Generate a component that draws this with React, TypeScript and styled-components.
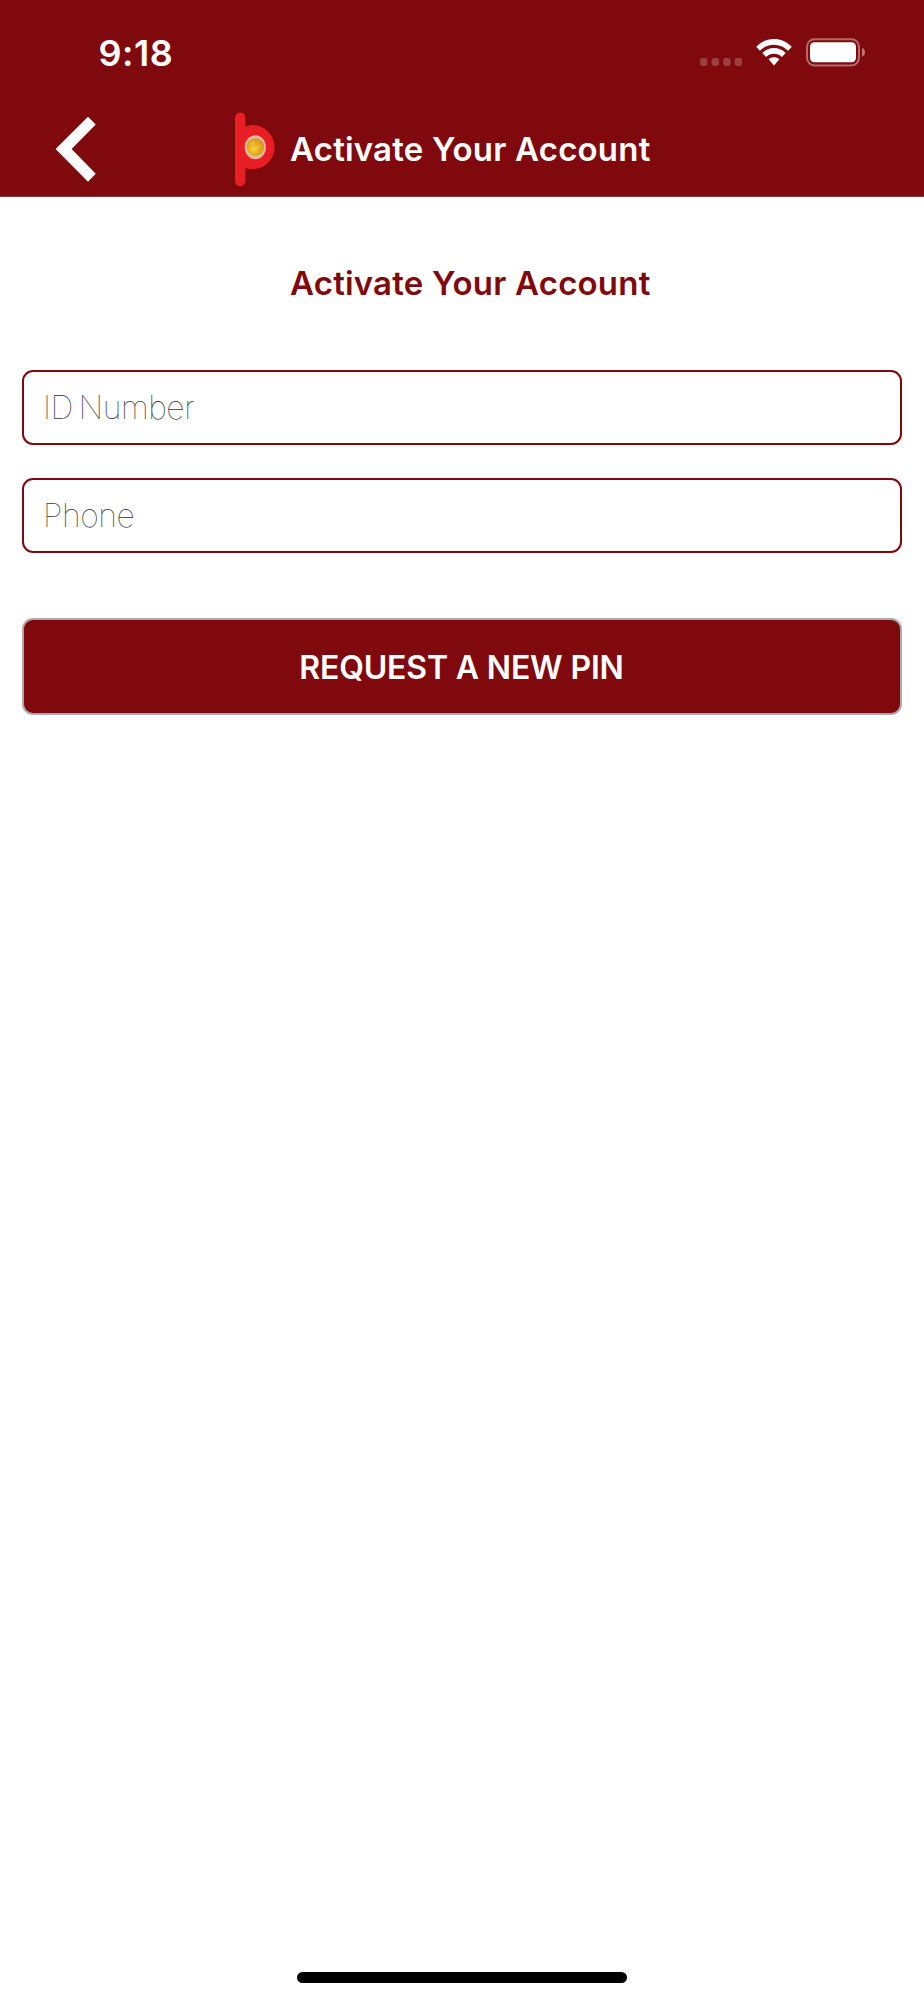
import React from 'react';
import styled, { createGlobalStyle } from 'styled-components';

const maroon = '#7f090c';

const GlobalStyle = createGlobalStyle`
  *, *::before, *::after { box-sizing: border-box; }
  body { margin: 0; background: #fff; font-family: Inter, 'Liberation Sans', sans-serif; }
`;

const Screen = styled.div`
  display: flex;
  flex-direction: column;
  width: 100%;
  height: 2000px;
  background: #fff;
`;

const Header = styled.header`
  height: 197px;
  background: ${maroon};
  border-bottom: 1px solid #8c3a3c;
`;

const StatusBar = styled.div`
  display: flex;
  justify-content: space-between;
  height: 106px;
  padding: 35px 58px 0 98.5px;
`;

const Clock = styled.time`
  height: 36px;
  line-height: 36px;
  font-size: 36px;
  font-weight: 600;
  letter-spacing: 0.5px;
  color: #fff;
`;

const StatusIcons = styled.svg`
  width: 168px;
  height: 36px;
`;

const NavBar = styled.nav`
  display: flex;
  align-items: flex-start;
  height: 90px;
  padding-left: 52px;
`;

const BackButton = styled.button`
  display: block;
  width: 48px;
  height: 84px;
  padding: 0;
  border: 0;
  background: none;
  svg { display: block; }
`;

const Logo = styled.svg`
  width: 48px;
  height: 84px;
  margin-left: 130px;
`;

const Title = styled.h1<{ $inBar?: boolean }>`
  margin: ${p => (p.$inBar ? '23px 0 0 12px' : '66px 0 0 290px')};
  height: 40px;
  line-height: 40px;
  font-size: 33px;
  font-weight: 600;
  letter-spacing: 0.2px;
  white-space: nowrap;
  color: ${p => (p.$inBar ? '#fff' : maroon)};
`;

const Form = styled.form`
  display: flex;
  flex-direction: column;
  gap: 33px;
  padding: 67px 22px 0;
`;

const Field = styled.input`
  height: 75px;
  padding: 0 20px 1px 19px;
  border: 2px solid ${maroon};
  border-radius: 11px;
  outline: none;
  background: #fff;
  font-family: inherit;
  font-size: 32px;
  font-weight: 100;
  letter-spacing: -0.45px;
  word-spacing: -3px;
  color: #222;
  &::placeholder { color: #333; opacity: 1; }
`;

const SubmitButton = styled.button`
  height: 97px;
  margin-top: 32px;
  padding: 1px 1px 0 0;
  border: 2px solid #aaa;
  border-radius: 11px;
  background: ${maroon};
  font-family: inherit;
  font-size: 32px;
  font-weight: 600;
  letter-spacing: -0.17px;
  color: #fff;
`;

const HomeIndicator = styled.div`
  width: 330px;
  height: 11px;
  margin: auto auto 17.5px 297px;
  border-radius: 6px;
  background: #000;
`;

export default function App() {
  return (
    <Screen>
      <GlobalStyle />
      <Header>
        <StatusBar>
          <Clock>9:18</Clock>
          <StatusIcons viewBox="698 35 168 36" aria-hidden="true">
            <g fill="#fff" fillOpacity="0.22">
              <rect x="700" y="58" width="7.4" height="8" rx="2.4" />
              <rect x="711.7" y="58" width="7.4" height="8" rx="2.4" />
              <rect x="723.2" y="58" width="7.4" height="8" rx="2.4" />
              <rect x="734.7" y="58" width="7.4" height="8" rx="2.4" />
            </g>
            <g fill="#fff">
              <path d="M756.2 46.8C766.2 36.4 781.8 36.4 791.8 46.8L788.1 50.7C780.2 42.7 767.8 42.7 759.9 50.7Z" />
              <path d="M762.3 53.1C768.9 46.4 779.1 46.4 785.7 53.1L781.9 57C777.4 52.6 770.6 52.6 766.1 57Z" />
              <path d="M768.6 59.3C771.6 56.7 776.4 56.7 779.4 59.3L774 65.6Z" />
            </g>
            <rect x="807" y="39.2" width="52" height="26.2" rx="7.5" fill="none" stroke="#fff" strokeOpacity="0.4" strokeWidth="2" />
            <rect x="810" y="42.3" width="46" height="20" rx="4.5" fill="#fff" />
            <path d="M862 47.8C866 49.4 866 55.2 862 56.8Z" fill="#fff" fillOpacity="0.45" />
          </StatusIcons>
        </StatusBar>
        <NavBar>
          <BackButton aria-label="Back">
            <svg width="48" height="84" viewBox="52 106 48 84">
              <path d="M88 116.7L95.7 124.4L71.6 148.9L95.7 173.8L88 181.7L55.6 148.9Z" fill="#fff" />
            </svg>
          </BackButton>
          <Logo viewBox="230 106 48 84" aria-hidden="true">
            <defs>
              <radialGradient id="coin" cx="0.4" cy="0.6" r="0.65">
                <stop offset="0" stopColor="#f8d238" />
                <stop offset="0.5" stopColor="#e6ab1c" />
                <stop offset="1" stopColor="#d9921c" />
              </radialGradient>
            </defs>
            <rect x="235" y="112.6" width="10.4" height="73.6" rx="5.2" fill="#e91e25" />
            <path d="M240 131C244 127 248 125 252.5 125A22.1 22.1 0 0 1 252.5 169.2C248 169.2 245 168 241 166Z" fill="#e91e25" />
            <ellipse cx="255.3" cy="147.2" rx="10.6" ry="12" fill="#e1b8a0" />
            <circle cx="255.4" cy="147" r="8.8" fill="url(#coin)" />
            <path d="M250 144.5L255 141.5M253 151L260 145" stroke="#f7dc70" strokeWidth="1.5" strokeOpacity="0.5" />
          </Logo>
          <Title as="div" $inBar>Activate Your Account</Title>
        </NavBar>
      </Header>
      <Title>Activate Your Account</Title>
      <Form onSubmit={e => e.preventDefault()}>
        <Field placeholder="ID Number" aria-label="ID Number" />
        <Field placeholder="Phone" aria-label="Phone" type="tel" />
        <SubmitButton>REQUEST A NEW PIN</SubmitButton>
      </Form>
      <HomeIndicator />
    </Screen>
  );
}
